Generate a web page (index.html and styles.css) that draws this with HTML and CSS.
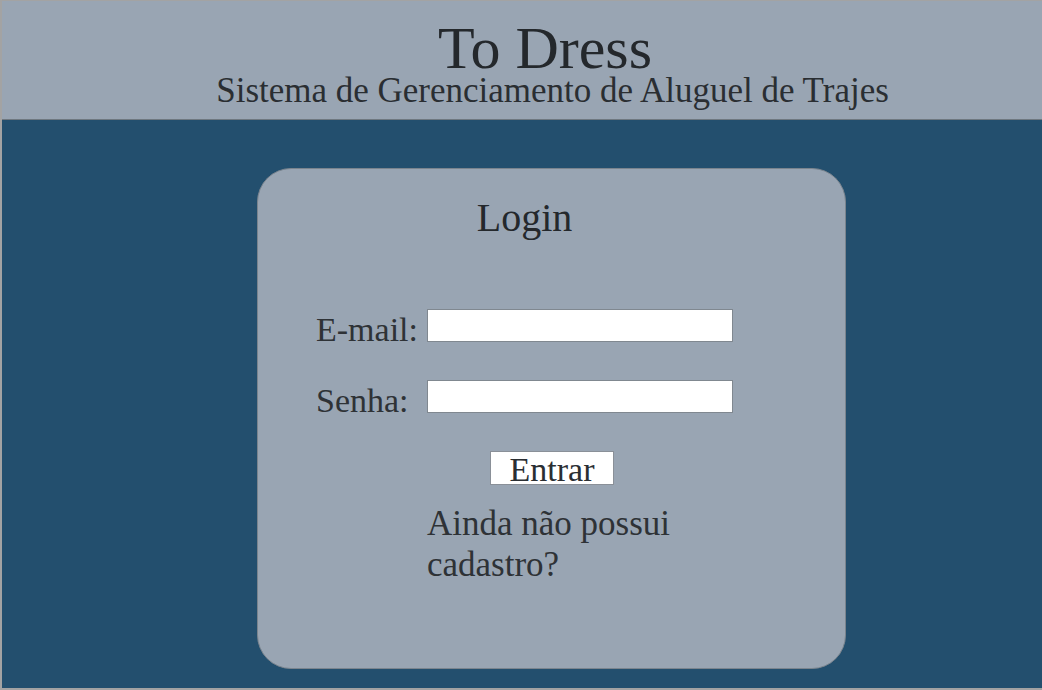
FILE: index.html
```html
<!DOCTYPE html>
<html lang="pt-BR">
<head>
<meta charset="utf-8">
<title>To Dress - Login</title>
<link rel="stylesheet" href="styles.css">
</head>
<body>
<div class="page">
  <header class="header">
    <h1 class="brand">To Dress</h1>
    <p class="tagline">Sistema de Gerenciamento de Aluguel de Trajes</p>
  </header>
  <main class="main">
    <form class="card">
      <h2 class="title">Login</h2>
      <div class="row">
        <label class="label" for="email">E-mail:</label>
        <input class="field" id="email" type="email">
      </div>
      <div class="row row-gap">
        <label class="label" for="senha">Senha:</label>
        <input class="field" id="senha" type="password">
      </div>
      <button class="btn" type="button">Entrar</button>
      <a class="signup" href="#">Ainda não possui cadastro?</a>
    </form>
  </main>
</div>
</body>
</html>
```
FILE: styles.css
```css
html, body {
  margin: 0;
  padding: 0;
  overflow: hidden;
}
body {
  font-family: "Liberation Serif", "Times New Roman", serif;
  color: #262a2e;
}
.page {
  width: 100%;
  height: 690px;
  box-sizing: border-box;
  border: 1px solid #a3a3a3;
  border-width: 1px 0 2px 2px;
  display: flex;
  flex-direction: column;
  background: #234f6e;
}
.header {
  height: 118px;
  flex: none;
  box-sizing: content-box;
  padding-left: 61px;
  background: #99a5b3;
  border-bottom: 1px solid #6f7880;
  text-align: center;
  display: flex;
  flex-direction: column;
  align-items: center;
}
.brand {
  margin: 21px 15px 0 0;
  font-weight: normal;
  font-size: 60px;
  line-height: 52px;
  color: #24282c;
}
.tagline {
  margin: 0;
  font-size: 35px;
  line-height: 34px;
  color: #2a2e32;
  white-space: nowrap;
}
.main {
  flex: 1;
  padding-top: 48px;
  padding-left: 255px;
}
.card {
  width: 589px;
  height: 501px;
  box-sizing: border-box;
  background: #99a5b3;
  border: 1px solid #7a848e;
  border-radius: 34px;
  padding: 26px 0 0 58px;
  display: flex;
  flex-direction: column;
}
.title {
  margin: 0;
  width: 417px;
  text-align: center;
  font-weight: normal;
  font-size: 40px;
  line-height: 46px;
  color: #24282c;
}
.row {
  display: flex;
  margin-top: 68px;
  height: 33px;
}
.row-gap {
  margin-top: 38px;
}
.label {
  width: 111px;
  flex: none;
  font-size: 34px;
  line-height: 33px;
  padding-top: 4px;
  color: #2e3236;
}
.field {
  width: 306px;
  height: 33px;
  box-sizing: border-box;
  margin: 0;
  border: 1px solid #808890;
  background: #fff;
  padding: 0 4px;
}
.btn {
  align-self: flex-start;
  margin: 38px 0 0 174px;
  width: 124px;
  height: 34px;
  box-sizing: border-box;
  border: 1px solid #8a9098;
  background: #fff;
  padding: 1px 0 0;
  font-family: inherit;
  font-size: 34px;
  line-height: 34px;
  color: #2a2e32;
  overflow: visible;
}
.signup {
  margin: 18px 0 0 111px;
  width: 270px;
  font-size: 35px;
  line-height: 41px;
  color: #2e3236;
  text-decoration: none;
}
```
